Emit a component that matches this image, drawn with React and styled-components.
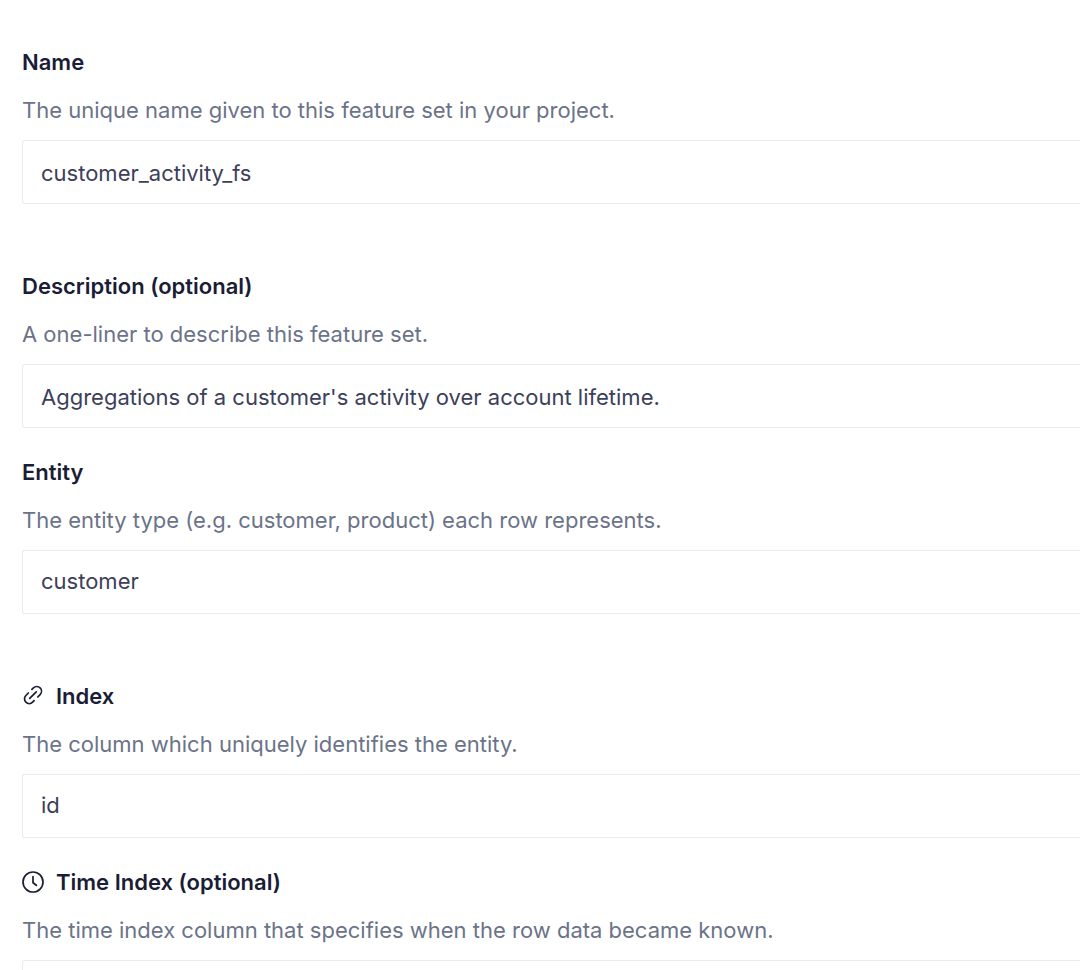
import React, { useId } from "react";
import styled, { createGlobalStyle } from "styled-components";

const GlobalStyle = createGlobalStyle`
  * { box-sizing: border-box; }
  html, body { overflow: hidden; }
  body {
    margin: 0;
    background: #ffffff;
    font-family: Inter, "Liberation Sans", sans-serif;
    font-size: 22px;
  }
`;

const Form = styled.form`
  display: flex;
  flex-direction: column;
  gap: 66px;
  height: 100vh;
  overflow: hidden;
  padding: 46px 0 0 22px;
`;

const FieldGroup = styled.div`
  display: flex;
  flex: none;
  flex-direction: column;
  gap: 28px;
`;

const FieldBox = styled.div`
  display: flex;
  flex-direction: column;
`;

const Label = styled.label`
  display: flex;
  align-items: center;
  gap: 12px;
  color: #1a1d35;
  font-weight: 600;
  line-height: 32px;
`;

const Hint = styled.p`
  margin: 16px 0 14px;
  color: #6b7388;
  line-height: 32px;
`;

const TextInput = styled.input`
  width: 100%;
  height: 64px;
  padding: ${(p) => (p.$combo ? "0 18px 2px" : "2px 18px 0")};
  border: 1px solid #e9ecef;
  border-right: 0;
  border-radius: 3px 0 0 3px;
  outline: none;
  background: #ffffff;
  color: #3c4058;
  font: inherit;
`;

const Icon = styled.svg`
  flex: none;
  width: 22px;
  height: 22px;
  fill: none;
  stroke: currentColor;
  stroke-width: 1.7;
  stroke-linecap: round;
  stroke-linejoin: round;
`;

const LinkIcon = () => (
  <Icon viewBox="0 0 22 22" aria-hidden="true">
    <path d="M9.9 4.3 11.4 2.9a4.7 4.7 0 0 1 6.7 6.7L15.8 12" />
    <path d="M12.1 15.7 10.6 17.2a4.7 4.7 0 0 1-6.7-6.7L6.3 8" />
    <path d="m7.7 13.4 6.6-6.6" />
  </Icon>
);

const ClockIcon = () => (
  <Icon viewBox="0 0 22 22" aria-hidden="true">
    <circle cx="11" cy="11" r="10" />
    <path d="M11 5.5v6.2l3.4 2.6" />
  </Icon>
);

function Field({ label, hint, value, icon, combo }) {
  const id = useId();
  return (
    <FieldBox>
      <Label htmlFor={id}>
        {icon}
        {label}
      </Label>
      <Hint id={`${id}-hint`}>{hint}</Hint>
      <TextInput id={id} aria-describedby={`${id}-hint`} defaultValue={value} $combo={combo} />
    </FieldBox>
  );
}

export default function App() {
  return (
    <>
      <GlobalStyle />
      <Form>
        <FieldGroup>
          <Field
            label="Name"
            hint="The unique name given to this feature set in your project."
            value="customer_activity_fs"
          />
        </FieldGroup>
        <FieldGroup>
          <Field
            label="Description (optional)"
            hint="A one-liner to describe this feature set."
            value="Aggregations of a customer's activity over account lifetime."
          />
          <Field
            label="Entity"
            hint="The entity type (e.g. customer, product) each row represents."
            value="customer"
            combo
          />
        </FieldGroup>
        <FieldGroup>
          <Field
            label="Index"
            hint="The column which uniquely identifies the entity."
            value="id"
            icon={<LinkIcon />}
            combo
          />
          <Field
            label="Time Index (optional)"
            hint="The time index column that specifies when the row data became known."
            value=""
            icon={<ClockIcon />}
            combo
          />
        </FieldGroup>
      </Form>
    </>
  );
}
